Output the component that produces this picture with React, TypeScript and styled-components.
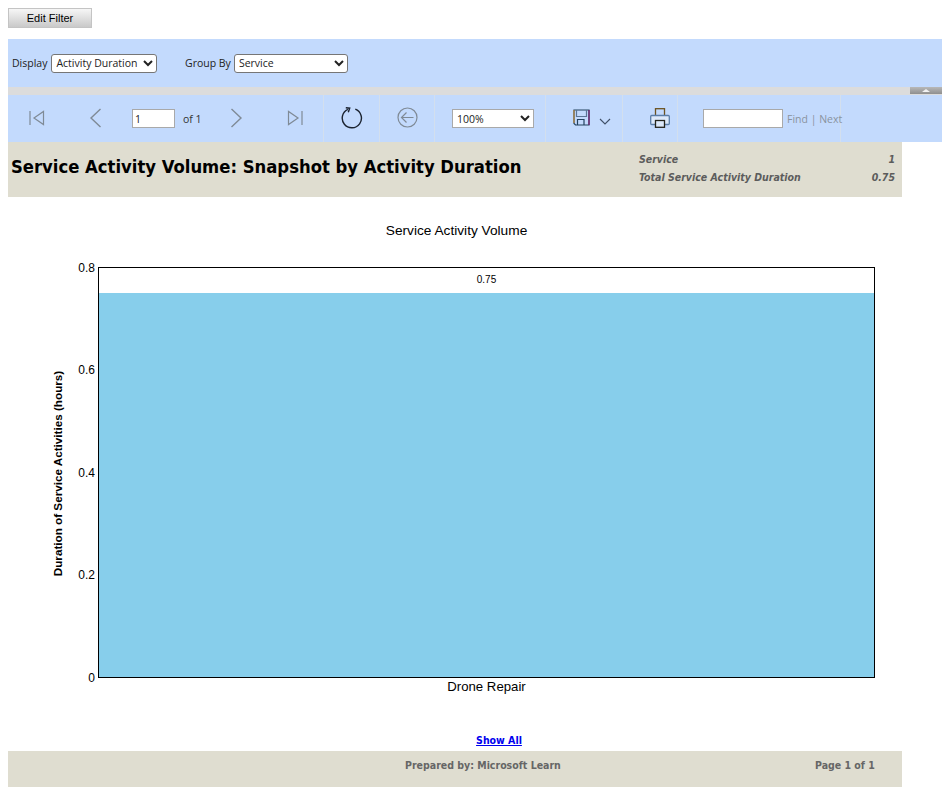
import React from 'react';
import styled, { createGlobalStyle } from 'styled-components';

const GlobalStyle = createGlobalStyle`
  html, body {
    margin: 0;
    padding: 0;
    background: #fff;
  }
  body {
    font-family: "Open Sans", "Noto Sans", sans-serif;
    overflow: hidden;
  }
`;

const UI_FONT = `"Open Sans", "Noto Sans", sans-serif`;
const REPORT_FONT = `"DejaVu Sans Condensed", "DejaVu Sans", Verdana, sans-serif`;
const CHART_FONT = `"Liberation Sans", Arial, sans-serif`;

const ICON_GREY = '#7f8a96';

const FirstIcon = () => (
  <svg width="18" height="16" viewBox="0 0 18 16" fill="none" stroke={ICON_GREY} strokeWidth="1.2">
    <path d="M2 1v14" />
    <path d="M15.5 1.5v13L6 8z" />
  </svg>
);

const PrevIcon = () => (
  <svg width="14" height="20" viewBox="0 0 14 20" fill="none" stroke={ICON_GREY} strokeWidth="1.4">
    <path d="M11.5 1L2 10l9.5 9" />
  </svg>
);

const NextIcon = () => (
  <svg width="14" height="20" viewBox="0 0 14 20" fill="none" stroke={ICON_GREY} strokeWidth="1.4">
    <path d="M2.5 1L12 10l-9.500 9" />
  </svg>
);

const LastIcon = () => (
  <svg width="18" height="16" viewBox="0 0 18 16" fill="none" stroke={ICON_GREY} strokeWidth="1.2">
    <path d="M16 1v14" />
    <path d="M2.500 1.500v13L12 8z" />
  </svg>
);

const RefreshIcon = () => (
  <svg width="22" height="22" viewBox="0 0 22 22" fill="none" stroke="#1b2330" strokeWidth="1.4">
    <path d="M14.300 2.200A9.600 9.600 0 1 1 6.900 2.400" />
    <path d="M4.800 0.800L8.700 1.200 7.300 5.200" />
  </svg>
);

const BackIcon = () => (
  <svg width="21" height="21" viewBox="0 0 21 21" fill="none" stroke={ICON_GREY} strokeWidth="1.2">
    <circle cx="10.500" cy="10.500" r="9.500" />
    <path d="M16.500 10.500H4.500M9.500 5.500l-5 5 5 5" />
  </svg>
);

const SaveIcon = () => (
  <svg width="17" height="17" viewBox="0 0 17 17" fill="none" stroke="#24425f" strokeWidth="1.2">
    <path d="M1 1h15v15H2.500L1 14.500z" />
    <path d="M3.500 1v6.500h10V1" stroke="#5b7596" />
    <path d="M4.500 16v-5.500h6.500V16" />
    <path d="M16 1v15" stroke="#7a1f70" />
    <path d="M1 1v13" stroke="#b8863a" />
  </svg>
);

const ChevronDownIcon = () => (
  <svg width="12" height="7" viewBox="0 0 12 7" fill="none" stroke="#3f5068" strokeWidth="1.100">
    <path d="M1 1l5 5 5-5" />
  </svg>
);

const PrintIcon = () => (
  <svg width="20" height="20" viewBox="0 0 20 20" fill="none" stroke="#24384f" strokeWidth="1.3">
    <rect x="5.500" y="0.700" width="9" height="7" stroke="#6b5220" />
    <rect x="0.700" y="7.500" width="18.600" height="9" rx="1" fill="#dce9fb" stroke="#5b7ea8" />
    <rect x="5.500" y="12.500" width="9" height="6.800" fill="#dce9fb" stroke="#24241c" />
  </svg>
);

const Page = styled.div`
  padding: 8px 0 0 8px;
  width: 934px;
`;

const EditButton = styled.button`
  display: block;
  width: 84px;
  height: 20px;
  padding: 0;
  border: 1px solid #c4c4c4;
  background: linear-gradient(#f6f6f6, #c9c9c9);
  color: #000;
  font-family: ${CHART_FONT};
  font-size: 11px;
  cursor: pointer;
`;

const FilterBar = styled.div`
  display: flex;
  align-items: center;
  height: 48px;
  margin-top: 11px;
  padding-left: 4px;
  background: #c3dafd;
  font-family: ${UI_FONT};
  font-size: 10.500px;
  color: #222;
`;

const FilterGroup = styled.label<{ $width: number; $gap: number }>`
  display: flex;
  align-items: center;
  gap: ${(p) => p.$gap}px;
  width: ${(p) => p.$width}px;
`;

const Select = styled.select<{ $width: number }>`
  width: ${(p) => p.$width}px;
  height: 19px;
  padding: 0;
  border: 1px solid #767676;
  border-radius: 3px;
  background-color: #fff;
  color: #222;
  font-family: ${UI_FONT};
  font-size: 10.500px;
`;

const Splitter = styled.div`
  display: flex;
  justify-content: flex-end;
  height: 8px;
  background: #dcdcdc;
`;

const CollapseHandle = styled.div`
  display: flex;
  align-items: center;
  justify-content: center;
  width: 32px;
  height: 7px;
  background: linear-gradient(#b8b8b8, #8f8f8f);
  &::after {
    content: '';
    border-left: 4px solid transparent;
    border-right: 4px solid transparent;
    border-bottom: 3px solid #f2f2f2;
  }
`;

const Toolbar = styled.div`
  display: flex;
  height: 47px;
  background: #c3dafd;
  font-family: ${UI_FONT};
  font-size: 10.500px;
  color: #333;
`;

const ToolCell = styled.div<{ $width: number; $last?: boolean }>`
  display: flex;
  align-items: center;
  justify-content: center;
  flex: none;
  width: ${(p) => p.$width}px;
  border-right: ${(p) => (p.$last ? 'none' : '1px solid #d3dfee')};
  box-sizing: border-box;
  svg {
    margin-bottom: 2px;
  }
`;

const PagerCell = styled(ToolCell)`
  justify-content: flex-start;
  padding-left: 20px;
`;

const FirstSlot = styled.span`
  display: flex;
  width: 61px;
`;

const PrevSlot = styled.span`
  display: flex;
  width: 43px;
`;

const PageInput = styled.input`
  width: 43px;
  height: 19px;
  box-sizing: border-box;
  padding: 0 2px;
  border: 1px solid #a9a9a9;
  background: #fff;
  font-family: ${UI_FONT};
  font-size: 10.500px;
  color: #222;
`;

const OfLabel = styled.span`
  width: 46px;
  margin-left: 8px;
  color: #333;
`;

const NextSlot = styled.span`
  display: flex;
  width: 57px;
`;

const ZoomCell = styled(ToolCell)`
  justify-content: flex-start;
  padding-left: 17px;
`;

const ZoomSelect = styled(Select)`
  border: 1px solid #a9a9a9;
  border-radius: 0;
`;

const SaveCell = styled(ToolCell)`
  justify-content: flex-start;
  padding-left: 27px;
`;

const SaveArrow = styled.span`
  display: flex;
  margin: 8px 0 0 9px;
`;

const PrintCell = styled(ToolCell)`
  justify-content: flex-start;
  padding-left: 27px;
`;

const FindCell = styled(ToolCell)`
  justify-content: flex-start;
  padding-left: 25px;
`;

const FindInput = styled.input`
  width: 80px;
  height: 19px;
  box-sizing: border-box;
  border: 1px solid #a9a9a9;
  background: #fff;
`;

const FindLinks = styled.span`
  margin-left: 4px;
  color: #8a939e;
  white-space: nowrap;
`;

const ReportHeader = styled.header`
  display: flex;
  width: 894px;
  height: 55px;
  background: #dfddd0;
`;

const ReportTitle = styled.h1`
  flex: 1;
  margin: 14px 0 0 3px;
  font-family: ${REPORT_FONT};
  font-size: 18.300px;
  font-weight: 700;
  line-height: 22px;
  color: #000;
`;

const Stats = styled.dl`
  display: grid;
  grid-template-columns: 200px 56px;
  grid-auto-rows: 18px;
  width: 256px;
  margin: 8px 7px 0 0;
  font-family: ${REPORT_FONT};
  font-size: 10.500px;
  font-weight: 700;
  font-style: italic;
  line-height: 18px;
  color: #5c5c5c;
`;

const StatLabel = styled.dt`
  margin: 0;
  white-space: nowrap;
`;

const StatValue = styled.dd`
  margin: 0;
  text-align: right;
`;

const ChartFrame = styled.div`
  width: 894px;
  height: 536px;
  svg {
    display: block;
  }
`;

const ShowAllRow = styled.div`
  display: flex;
  justify-content: center;
  width: 894px;
  height: 18px;
  padding-left: 88px;
  box-sizing: border-box;
`;

const ShowAll = styled.a`
  font-family: ${REPORT_FONT};
  font-size: 10.500px;
  font-weight: 700;
  line-height: 14px;
  color: #0000ee;
  text-decoration: underline;
`;

const Footer = styled.footer`
  display: flex;
  width: 894px;
  height: 36px;
  background: #dfddd0;
  font-family: ${REPORT_FONT};
  font-size: 10.500px;
  font-weight: 700;
  line-height: 28px;
  color: #666;
`;

const FooterCenter = styled.div`
  width: 807px;
  padding-left: 397px;
  box-sizing: border-box;
  white-space: nowrap;
`;

const FooterRight = styled.div`
  white-space: nowrap;
`;

const ChartText = styled.text<{ $size?: number; $bold?: boolean }>`
  font-family: ${CHART_FONT};
  font-size: ${(p) => p.$size ?? 12}px;
  font-weight: ${(p) => (p.$bold ? 700 : 400)};
  fill: #000;
`;

const yTicks = [
  { label: '0.8', y: 70 },
  { label: '0.6', y: 172 },
  { label: '0.4', y: 275 },
  { label: '0.2', y: 377 },
  { label: '0', y: 480 },
];

const Chart = () => (
  <svg width="894" height="536" viewBox="0 0 894 536">
    <ChartText x="448.500" y="38" textAnchor="middle" $size={13.700}>
      Service Activity Volume
    </ChartText>
    <rect x="90.500" y="96" width="776" height="385" fill="#87ceeb" />
    <rect x="90.500" y="70.500" width="776" height="410" fill="none" stroke="#000" />
    <ChartText x="478.500" y="86" textAnchor="middle" $size={10}>
      0.75
    </ChartText>
    {yTicks.map((t) => (
      <ChartText key={t.label} x="87" y={t.y + 5} textAnchor="end" $size={12}>
        {t.label}
      </ChartText>
    ))}
    <ChartText x="478.500" y="494" textAnchor="middle" $size={13.200}>
      Drone Repair
    </ChartText>
    <ChartText transform="translate(53.500 276.500) rotate(-90)" textAnchor="middle" $size={11.700} $bold>
      Duration of Service Activities (hours)
    </ChartText>
  </svg>
);

export default function App() {
  return (
    <Page>
      <GlobalStyle />
      <EditButton type="button">Edit Filter</EditButton>
      <FilterBar>
        <FilterGroup $width={173} $gap={4}>
          Display
          <Select $width={106} defaultValue="Activity Duration">
            <option>Activity Duration</option>
          </Select>
        </FilterGroup>
        <FilterGroup $width={170} $gap={3}>
          Group By
          <Select $width={114} defaultValue="Service">
            <option>Service</option>
          </Select>
        </FilterGroup>
      </FilterBar>
      <Splitter>
        <CollapseHandle />
      </Splitter>
      <Toolbar>
        <PagerCell $width={316}>
          <FirstSlot>
            <FirstIcon />
          </FirstSlot>
          <PrevSlot>
            <PrevIcon />
          </PrevSlot>
          <PageInput defaultValue="1" />
          <OfLabel>of 1</OfLabel>
          <NextSlot>
            <NextIcon />
          </NextSlot>
          <LastIcon />
        </PagerCell>
        <ToolCell $width={56}>
          <RefreshIcon />
        </ToolCell>
        <ToolCell $width={55}>
          <BackIcon />
        </ToolCell>
        <ZoomCell $width={111}>
          <ZoomSelect $width={82} defaultValue="100%">
            <option>100%</option>
          </ZoomSelect>
        </ZoomCell>
        <SaveCell $width={77}>
          <SaveIcon />
          <SaveArrow>
            <ChevronDownIcon />
          </SaveArrow>
        </SaveCell>
        <PrintCell $width={55}>
          <PrintIcon />
        </PrintCell>
        <FindCell $width={163}>
          <FindInput />
          <FindLinks>Find | Next</FindLinks>
        </FindCell>
        <ToolCell $width={101} $last />
      </Toolbar>
      <ReportHeader>
        <ReportTitle>Service Activity Volume: Snapshot by Activity Duration</ReportTitle>
        <Stats>
          <StatLabel>Service</StatLabel>
          <StatValue>1</StatValue>
          <StatLabel>Total Service Activity Duration</StatLabel>
          <StatValue>0.75</StatValue>
        </Stats>
      </ReportHeader>
      <ChartFrame>
        <Chart />
      </ChartFrame>
      <ShowAllRow>
        <ShowAll href="#">Show All</ShowAll>
      </ShowAllRow>
      <Footer>
        <FooterCenter>Prepared by: Microsoft Learn</FooterCenter>
        <FooterRight>Page 1 of 1</FooterRight>
      </Footer>
    </Page>
  );
}
